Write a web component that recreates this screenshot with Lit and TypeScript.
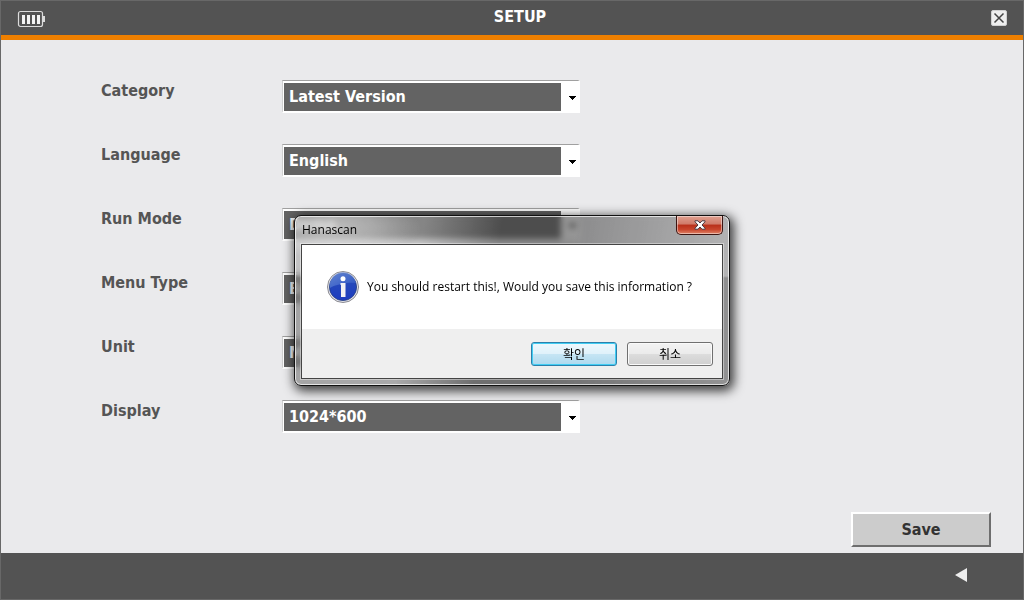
import { LitElement, html, css } from "lit";
import { customElement, state } from "lit/decorators.js";

interface Field {
  id: string;
  label: string;
  options: string[];
}

const FIELDS: Field[] = [
  { id: "category", label: "Category", options: ["Latest Version"] },
  { id: "language", label: "Language", options: ["English"] },
  { id: "run-mode", label: "Run Mode", options: ["Demo"] },
  { id: "menu-type", label: "Menu Type", options: ["Basic"] },
  { id: "unit", label: "Unit", options: ["Metric"] },
  { id: "display", label: "Display", options: ["1024*600"] },
];

@customElement("message-dialog")
export class MessageDialog extends LitElement {
  static styles = css`
    :host {
      display: block;
      font-family: "Open Sans", "Noto Sans CJK KR", sans-serif;
      font-size: 12px;
      font-weight: 400;
      line-height: 16px;
      color: #000;
    }
    .frame {
      box-sizing: border-box;
      width: 436px;
      max-width: 100%;
      padding: 0 6px 6px;
      border: 1px solid #111;
      border-radius: 7px;
      background:
        radial-gradient(ellipse 90px 30px at 36px 12px, rgba(255, 255, 255, 0.5) 0, rgba(255, 255, 255, 0.3) 50%, rgba(255, 255, 255, 0) 100%),
        linear-gradient(100deg, rgba(255, 255, 255, 0.15) 0, rgba(255, 255, 255, 0.2) 28%, rgba(0, 0, 0, 0.25) 45%, rgba(0, 0, 0, 0.25) 60%, rgba(0, 0, 0, 0) 100%),
        linear-gradient(rgba(255, 255, 255, 0) 60px, rgba(60, 60, 60, 0.3) 62px),
        rgba(110, 110, 110, 0.4);
      backdrop-filter: blur(3px);
      box-shadow:
        inset 0 0 0 1px rgba(255, 255, 255, 0.7),
        2px 3px 11px 2px rgba(0, 0, 0, 0.75);
    }
    .title-bar {
      display: flex;
      justify-content: space-between;
      height: 28px;
    }
    .title {
      margin: 0;
      padding: 6px 0 0 1px;
      font-size: 12px;
      font-weight: 400;
    }
    .close {
      display: flex;
      align-items: center;
      justify-content: center;
      width: 47px;
      height: 19px;
      padding: 0;
      border: 1px solid #3c1512;
      border-top: 0;
      border-radius: 0 0 5px 5px;
      background: linear-gradient(#e0a090 0, #d07a68 45%, #b8301a 50%, #c8452c 75%, #e08468 100%);
      box-shadow: inset 0 0 0 1px rgba(255, 255, 255, 0.45);
    }
    .panel {
      border: 1px solid #444;
      background: #efefef;
      box-shadow: 0 0 0 1px rgba(255, 255, 255, 0.4);
    }
    .message {
      display: flex;
      align-items: center;
      gap: 8px;
      height: 84px;
      padding-left: 25px;
      background: #fff;
    }
    .message p {
      margin: 0;
      white-space: nowrap;
    }
    .actions {
      display: flex;
      justify-content: flex-end;
      gap: 10px;
      padding: 13px 9px 12px;
    }
    .action {
      width: 86px;
      height: 24px;
      padding: 2px 0 0;
      border: 1px solid #707070;
      border-radius: 3px;
      background: linear-gradient(#f3f3f3 0, #ebebeb 50%, #dddddd 50%, #cfcfcf 100%);
      box-shadow: inset 0 0 0 1px #fafafa;
      font: inherit;
      color: #000;
    }
    .action.primary {
      border-color: #2c80ab;
      background: linear-gradient(#eef8fd 0, #dff1fa 50%, #c6e5f4 50%, #aed9ee 100%);
      box-shadow: inset 0 0 0 1px #41cdf3;
    }
  `;

  private dismiss() {
    this.dispatchEvent(new CustomEvent("dismiss"));
  }

  render() {
    return html`
      <div class="frame" role="dialog" aria-labelledby="title">
        <div class="title-bar">
          <h2 class="title" id="title">Hanascan</h2>
          <button class="close" aria-label="Close" @click=${this.dismiss}>
            <svg width="12" height="10" viewBox="0 0 12 10">
              <path d="M1 .8h3L6 3 8 .8h3v1L8 5l3 3.200v1H8L6 7 4 9.200H1v-1L4 5 1 1.800z" fill="#fff" stroke="#4b3a40" stroke-width="1" />
            </svg>
          </button>
        </div>
        <div class="panel">
          <div class="message">
            <svg width="32" height="32" viewBox="0 0 32 32" aria-hidden="true">
              <defs>
                <linearGradient id="ball" x1="0" y1="0" x2="0" y2="1">
                  <stop offset="0" stop-color="#2a50b8" />
                  <stop offset="1" stop-color="#1c3cc0" />
                </linearGradient>
                <linearGradient id="shine" x1="0" y1="0" x2="1" y2="1">
                  <stop offset="0" stop-color="#7596dc" />
                  <stop offset="1" stop-color="#2f58c4" />
                </linearGradient>
              </defs>
              <circle cx="16" cy="16" r="15.500" fill="#e4e4e8" stroke="#8b8b92" stroke-width="1" />
              <circle cx="16" cy="16" r="13.600" fill="url(#ball)" stroke="#253d80" stroke-width=".8" />
              <path d="M3 17A13 13 0 0 1 29 12C22 11 9 13 3 17z" fill="url(#shine)" opacity=".75" />
              <circle cx="16" cy="7.800" r="2.500" fill="#fff" />
              <path d="M13.500 12h5v14h-4.500V14h-.500z" fill="#f2f2f4" />
            </svg>
            <p>You should restart this!, Would you save this information ?</p>
          </div>
          <div class="actions">
            <button class="action primary" @click=${this.dismiss}>확인</button>
            <button class="action" @click=${this.dismiss}>취소</button>
          </div>
        </div>
      </div>
    `;
  }
}

@customElement("app-root")
export class AppRoot extends LitElement {
  @state() private asking = true;

  static styles = css`
    :host {
      display: block;
      font-family: "DejaVu Sans Condensed", "DejaVu Sans", sans-serif;
      font-size: 16px;
      font-weight: 700;
      line-height: 20px;
      color: #555;
    }
    .screen {
      position: relative;
      box-sizing: border-box;
      display: flex;
      flex-direction: column;
      min-height: 100vh;
      border: 1px solid #686868;
      background: #eaeaec;
    }
    .header {
      display: grid;
      grid-template-columns: 1fr auto 1fr;
      align-items: center;
      height: 34px;
      padding: 0 16px;
      border-bottom: 5px solid #ee7f00;
      background: #535353;
      color: #fff;
    }
    .header h1 {
      margin: 0;
      padding: 0 0 2px 16px;
      font-size: 16px;
    }
    .battery {
      padding-top: 2px;
    }
    .icon-button {
      display: flex;
      justify-self: end;
      padding: 0;
      border: 0;
      background: none;
    }
    .form {
      flex: 1;
      display: flex;
      flex-direction: column;
      gap: 31px;
      padding: 40px 32px 6px 100px;
    }
    .row {
      display: grid;
      grid-template-columns: 181px minmax(0, 298px);
      align-items: start;
    }
    .row label {
      padding-top: 1px;
    }
    .picker {
      position: relative;
      display: flex;
    }
    .picker select {
      appearance: none;
      box-sizing: border-box;
      width: 100%;
      height: 33px;
      padding: 2px 20px 0 6px;
      border: 2px solid #fff;
      border-top: 1px solid #a0a0a0;
      border-left: 1px solid #d0d0d0;
      border-radius: 0;
      background: linear-gradient(#636363, #636363) 1px 2px / calc(100% - 18px) 28px no-repeat #fff;
      font: inherit;
      color: #fff;
    }
    .arrow {
      position: absolute;
      top: 16px;
      right: 4px;
      pointer-events: none;
    }
    .save {
      align-self: flex-end;
      width: 140px;
      height: 35px;
      margin-top: auto;
      border: 2px solid;
      border-color: #fff #6e6e6e #6e6e6e #fff;
      background: #ccc;
      font: inherit;
      color: #333;
    }
    .footer {
      display: flex;
      align-items: center;
      justify-content: flex-end;
      height: 44px;
      padding: 0 56px 2px 0;
      background: #535353;
    }
    .overlay {
      position: absolute;
      inset: 0;
      display: flex;
      align-items: center;
      justify-content: center;
    }
  `;

  render() {
    return html`
      <div class="screen">
        <header class="header">
          <svg class="battery" width="28" height="18" viewBox="0 0 28 18" role="img" aria-label="Battery">
            <rect x="1.500" y="1.500" width="24" height="15" rx="2" fill="none" stroke="#dcdcdc" stroke-width="1.200" />
            <path d="M26 6h2v6h-2z" fill="#dcdcdc" />
            <path d="M5 5h3v9H5zM10 5h3v9h-3zM15 5h3v9h-3zM20 5h3v9h-3z" fill="#f4f4f4" />
          </svg>
          <h1>SETUP</h1>
          <button class="icon-button" aria-label="Close">
            <svg width="16" height="16" viewBox="0 0 16 16">
              <rect x=".5" y=".5" width="15" height="15" rx="1.500" fill="#eee" stroke="#d0d0d0" />
              <path d="M3.500 3.500l9 9M12.500 3.500l-9 9" stroke="#444" stroke-width="1.500" />
            </svg>
          </button>
        </header>
        <main class="form">
          ${FIELDS.map(
            (field) => html`
              <div class="row">
                <label for=${field.id}>${field.label}</label>
                <div class="picker">
                  <select id=${field.id}>
                    ${field.options.map((option) => html`<option>${option}</option>`)}
                  </select>
                  <svg class="arrow" width="7" height="4" viewBox="0 0 7 4" shape-rendering="crispEdges" aria-hidden="true">
                    <path d="M0 0h7v1H6v1H5v1H4v1H3V3H2V2H1V1H0z" fill="#000" />
                  </svg>
                </div>
              </div>
            `
          )}
          <button class="save" @click=${() => (this.asking = true)}>Save</button>
        </main>
        <footer class="footer">
          <button class="icon-button" aria-label="Back">
            <svg width="12" height="14" viewBox="0 0 12 14"><path d="M0 7L12 0v14z" fill="#eee" /></svg>
          </button>
        </footer>
        ${this.asking
          ? html`<div class="overlay"><message-dialog @dismiss=${() => (this.asking = false)}></message-dialog></div>`
          : null}
      </div>
    `;
  }
}
